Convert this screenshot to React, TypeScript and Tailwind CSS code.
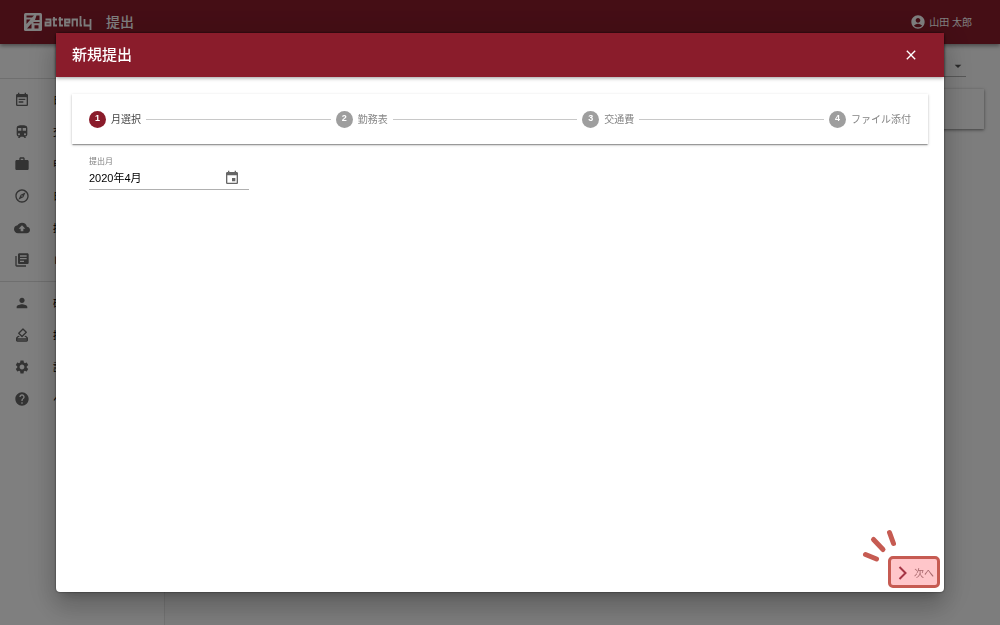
import type { ReactNode } from "react";
import {
  MdAccountCircle,
  MdArrowDropDown,
  MdBackup,
  MdClose,
  MdEvent,
  MdEventNote,
  MdHelp,
  MdLibraryBooks,
  MdOutlineExplore,
  MdOutlineHowToVote,
  MdPerson,
  MdSettings,
  MdTrain,
  MdWork,
} from "react-icons/md";

const mainMenu = [
  { label: "日報", icon: <MdEventNote /> },
  { label: "交通", icon: <MdTrain /> },
  { label: "申請", icon: <MdWork /> },
  { label: "日程", icon: <MdOutlineExplore /> },
  { label: "提出", icon: <MdBackup /> },
  { label: "レポート", icon: <MdLibraryBooks /> },
];

const adminMenu = [
  { label: "確認", icon: <MdPerson /> },
  { label: "提出承認", icon: <MdOutlineHowToVote /> },
  { label: "設定", icon: <MdSettings /> },
  { label: "ヘルプ", icon: <MdHelp /> },
];

const steps = ["月選択", "勤務表", "交通費", "ファイル添付"];

function Logo() {
  return (
    <svg width="69" height="20" viewBox="0 0 69 20" fill="none" aria-label="attenly" role="img">
      <rect x="0" y="1" width="18" height="18" rx="1.500" fill="#fff" />
      <path
        d="M2.500 3.500h7.500L8 5.500H2.500zM2.500 7.500h4L2.500 12zM12.500 3.500h3v4.500h-4.500zM3 16.500l4.500-5v5zM9.500 10h6v1.200h-6zM10.500 13.200h4v3.300h-4z"
        fill="#8a1c2b"
      />
      <path
        d="M21.500 7.500h5v6h-5v-3h5M30 5v8.500h3M28.500 7.500h4.500M36 5v8.500h3M34.500 7.500h4.500M45.500 13.500h-4.500v-6h4.500v3h-4.500M48.500 14.500v-7h4.500v7M56.500 4v9.500h1.500M60.500 7v6.500h6M66.500 7v11"
        stroke="#fff"
        strokeWidth="1.800"
      />
    </svg>
  );
}

function MenuItem({ label, icon }: { label: string; icon: ReactNode }) {
  return (
    <li>
      <a href="#" className="flex h-8 items-center pl-3.5 text-black">
        <span className="w-[39px] text-base text-[#666]">{icon}</span>
        <span className="text-[10px]">{label}</span>
      </a>
    </li>
  );
}

function Stepper() {
  return (
    <ol className="flex h-[50px] items-center px-[17px] shadow-[0_2px_1px_-1px_rgba(0,0,0,0.2),0_1px_1px_rgba(0,0,0,0.14),0_1px_3px_rgba(0,0,0,0.2)]">
      {steps.map((step, i) => (
        <li key={step} className={i < steps.length - 1 ? "flex flex-1 items-center" : "flex items-center"}>
          <span
            className={`flex size-[17px] items-center justify-center rounded-full text-[9px] font-bold text-white ${
              i === 0 ? "bg-[#8a1c2b]" : "bg-[#9e9e9e]"
            }`}
          >
            {i + 1}
          </span>
          <span className={`ml-[5px] text-[10px] ${i === 0 ? "text-[#444]" : "text-[#858585]"}`}>{step}</span>
          {i < steps.length - 1 && <span className="mx-[5px] h-px flex-1 bg-[#c8c8c8]" />}
        </li>
      ))}
    </ol>
  );
}

function SubmitDialog() {
  return (
    <div
      role="dialog"
      aria-modal="true"
      aria-labelledby="dialog-title"
      className="flex flex-1 flex-col rounded-sm bg-white shadow-[0_7px_10px_-5px_rgba(0,0,0,0.2),0_16px_25px_2px_rgba(0,0,0,0.14),0_6px_31px_5px_rgba(0,0,0,0.12),0_0_2px_rgba(0,0,0,0.7)]"
    >
      <header className="flex h-11 items-center justify-between bg-[#8a1c2b] pl-4 pr-[15px] text-white shadow-[0_1px_4px_rgba(0,0,0,0.4)]">
        <h2 id="dialog-title" className="text-[15px] font-medium">
          新規提出
        </h2>
        <button type="button" aria-label="閉じる" className="p-2.5 text-base">
          <MdClose stroke="currentColor" />
        </button>
      </header>

      <div className="flex-1 px-4 pt-[17px]">
        <Stepper />
        <div className="ml-[17px] mt-3 w-40 border-b border-[#b0b0b0] pb-px">
          <label htmlFor="month" className="block text-[8px] leading-3 text-[#808080]">
            提出月
          </label>
          <div className="flex h-5 items-center">
            <input id="month" type="text" defaultValue="2020年4月" className="min-w-0 flex-1 text-[11px] text-black outline-none" />
            <button type="button" aria-label="カレンダーを開く" className="mr-[9px] text-base text-[#666]">
              <MdEvent />
            </button>
          </div>
        </div>
      </div>

      <footer className="flex justify-end p-1">
        <div className="relative">
          <svg className="absolute -left-7 -top-7" width="38" height="36" viewBox="0 0 38 36" fill="none" aria-hidden="true">
            <path d="M5.500 26.500l11 4.500M13.500 11.500l9.500 10M29.500 4.500l4 11" stroke="#c65b52" strokeWidth="5" strokeLinecap="round" />
          </svg>
          <button
            type="button"
            className="flex h-8 w-[52px] items-center rounded-[5px] border-3 border-[#c65b52] bg-[#ffc6ca] pl-[7px] pt-0.5 text-[10px] text-[#a8686d]"
          >
            <svg width="10" height="14" viewBox="0 0 10 14" fill="none" aria-hidden="true">
              <path d="M1.500 1l6 6-6 6" stroke="#a53545" strokeWidth="2" />
            </svg>
            <span className="ml-1.5 whitespace-nowrap">次へ</span>
          </button>
        </div>
      </footer>
    </div>
  );
}

export default function App() {
  return (
    <div className="flex h-screen flex-col overflow-hidden bg-[#fafafa] font-['Liberation_Sans','Noto_Sans_CJK_JP',sans-serif]">
      <header className="z-10 flex h-11 shrink-0 items-center bg-[#8a1c2b] px-6 text-white shadow-[0_2px_4px_rgba(0,0,0,0.4)]">
        <Logo />
        <h1 className="ml-[13px] text-sm font-medium">提出</h1>
        <div className="ml-auto flex items-center gap-[3px] pr-1 text-[10px]">
          <MdAccountCircle className="text-base" />
          山田 太郎
        </div>
      </header>

      <div className="flex min-h-0 flex-1">
        <nav className="w-[165px] border-r border-[#e6e6e6] bg-white">
          <div className="h-[35px] border-b border-[#dedede]" />
          <ul className="pb-[5px] pt-[5px]">
            {mainMenu.map((item) => (
              <MenuItem key={item.label} {...item} />
            ))}
          </ul>
          <ul className="border-t border-[#dedede] py-[5px]">
            {adminMenu.map((item) => (
              <MenuItem key={item.label} {...item} />
            ))}
          </ul>
        </nav>

        <main className="flex-1 px-4 pt-[11px]">
          <div className="flex justify-end pr-[18px]">
            <button type="button" aria-label="年を選択" className="flex h-[22px] w-24 items-center justify-end border-b border-[#b0b0b0] text-base text-[#555]">
              <MdArrowDropDown />
            </button>
          </div>
          <section className="mt-3 h-10 bg-[#fafafa] shadow-[0_1px_3px_rgba(0,0,0,0.5)]" />
        </main>
      </div>

      <div className="fixed inset-0 z-20 flex bg-black/50 px-14 pb-[33px] pt-[33px]">
        <SubmitDialog />
      </div>
    </div>
  );
}
